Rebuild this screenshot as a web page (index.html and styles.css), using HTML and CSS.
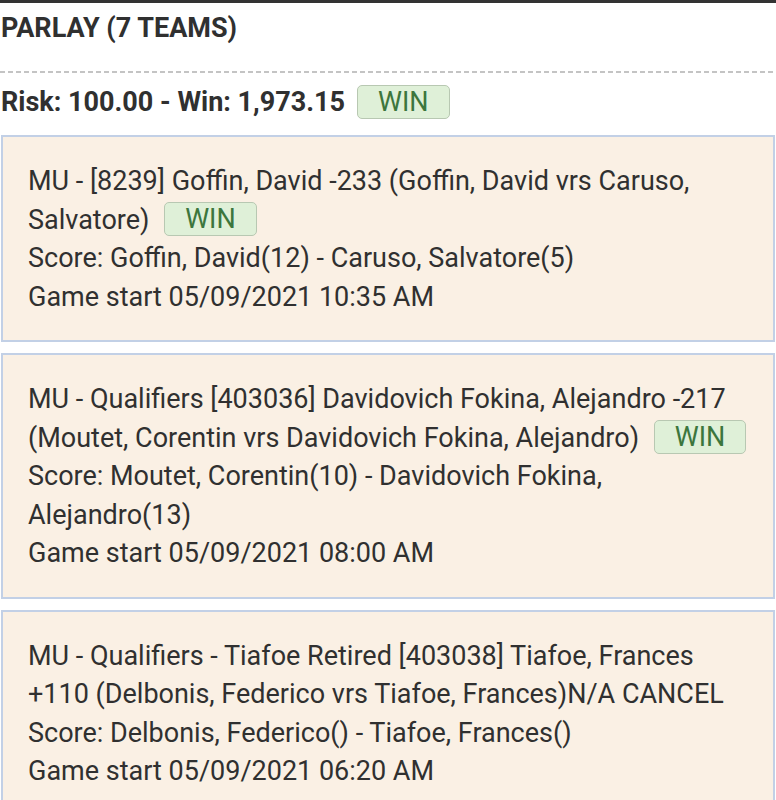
FILE: index.html
```html
<!DOCTYPE html>
<html>
<head>
<meta charset="utf-8">
<link rel="stylesheet" href="styles.css">
</head>
<body>
<div class="page">
  <div class="title">PARLAY (7 TEAMS)</div>
  <div class="divider"></div>
  <div class="summary">
    <span>Risk: 100.00 - Win: 1,973.15</span>
    <span class="badge">WIN</span>
  </div>
  <div class="card">
    <div class="line">MU - [8239] Goffin, David -233 (Goffin, David vrs Caruso,<br>Salvatore) <span class="badge">WIN</span></div>
    <div class="line">Score: Goffin, David(12) - Caruso, Salvatore(5)</div>
    <div class="line">Game start 05/09/2021 10:35 AM</div>
  </div>
  <div class="card">
    <div class="line">MU - Qualifiers [403036] Davidovich Fokina, Alejandro -217<br>(Moutet, Corentin vrs Davidovich Fokina, Alejandro) <span class="badge">WIN</span></div>
    <div class="line">Score: Moutet, Corentin(10) - Davidovich Fokina,<br>Alejandro(13)</div>
    <div class="line">Game start 05/09/2021 08:00 AM</div>
  </div>
  <div class="card">
    <div class="line">MU - Qualifiers - Tiafoe Retired [403038] Tiafoe, Frances<br>+110 (Delbonis, Federico vrs Tiafoe, Frances)N/A CANCEL</div>
    <div class="line">Score: Delbonis, Federico() - Tiafoe, Frances()</div>
    <div class="line">Game start 05/09/2021 06:20 AM</div>
  </div>
</div>
</body>
</html>
```
FILE: styles.css
```css
html, body {
  margin: 0;
  padding: 0;
  background: #fff;
}
.page {
  border-top: 3px solid #333;
  font-family: Roboto, "Liberation Sans", sans-serif;
  color: #303030;
  font-size: 27px;
  overflow: hidden;
  height: 797px;
  white-space: nowrap;
}
.title {
  font-weight: bold;
  padding: 9px 0 0 1px;
  line-height: 32px;
  height: 59px;
}
.divider {
  height: 2px;
  background: repeating-linear-gradient(to right, #c4c4c4 0 5px, transparent 5px 8px);
  margin-bottom: 11px;
}
.summary {
  font-weight: bold;
  display: flex;
  align-items: center;
  gap: 12px;
  padding-left: 1px;
  height: 36px;
  margin-bottom: 15px;
}
.badge {
  display: inline-block;
  background: #dff0d8;
  border: 1.5px solid #b8c8b2;
  border-radius: 5px;
  color: #3c763d;
  font-weight: normal;
  padding: 0 20px;
  line-height: 32px;
  vertical-align: middle;
}
.card {
  background: #faf0e4;
  border: 2px solid #c2d0e6;
  margin: 0 1px 11px 1px;
  padding: 25px 10px 24px 25px;
}
.line {
  line-height: 38.5px;
}
.card .badge {
  margin-left: 8px;
  margin-top: -4px;
}
```
